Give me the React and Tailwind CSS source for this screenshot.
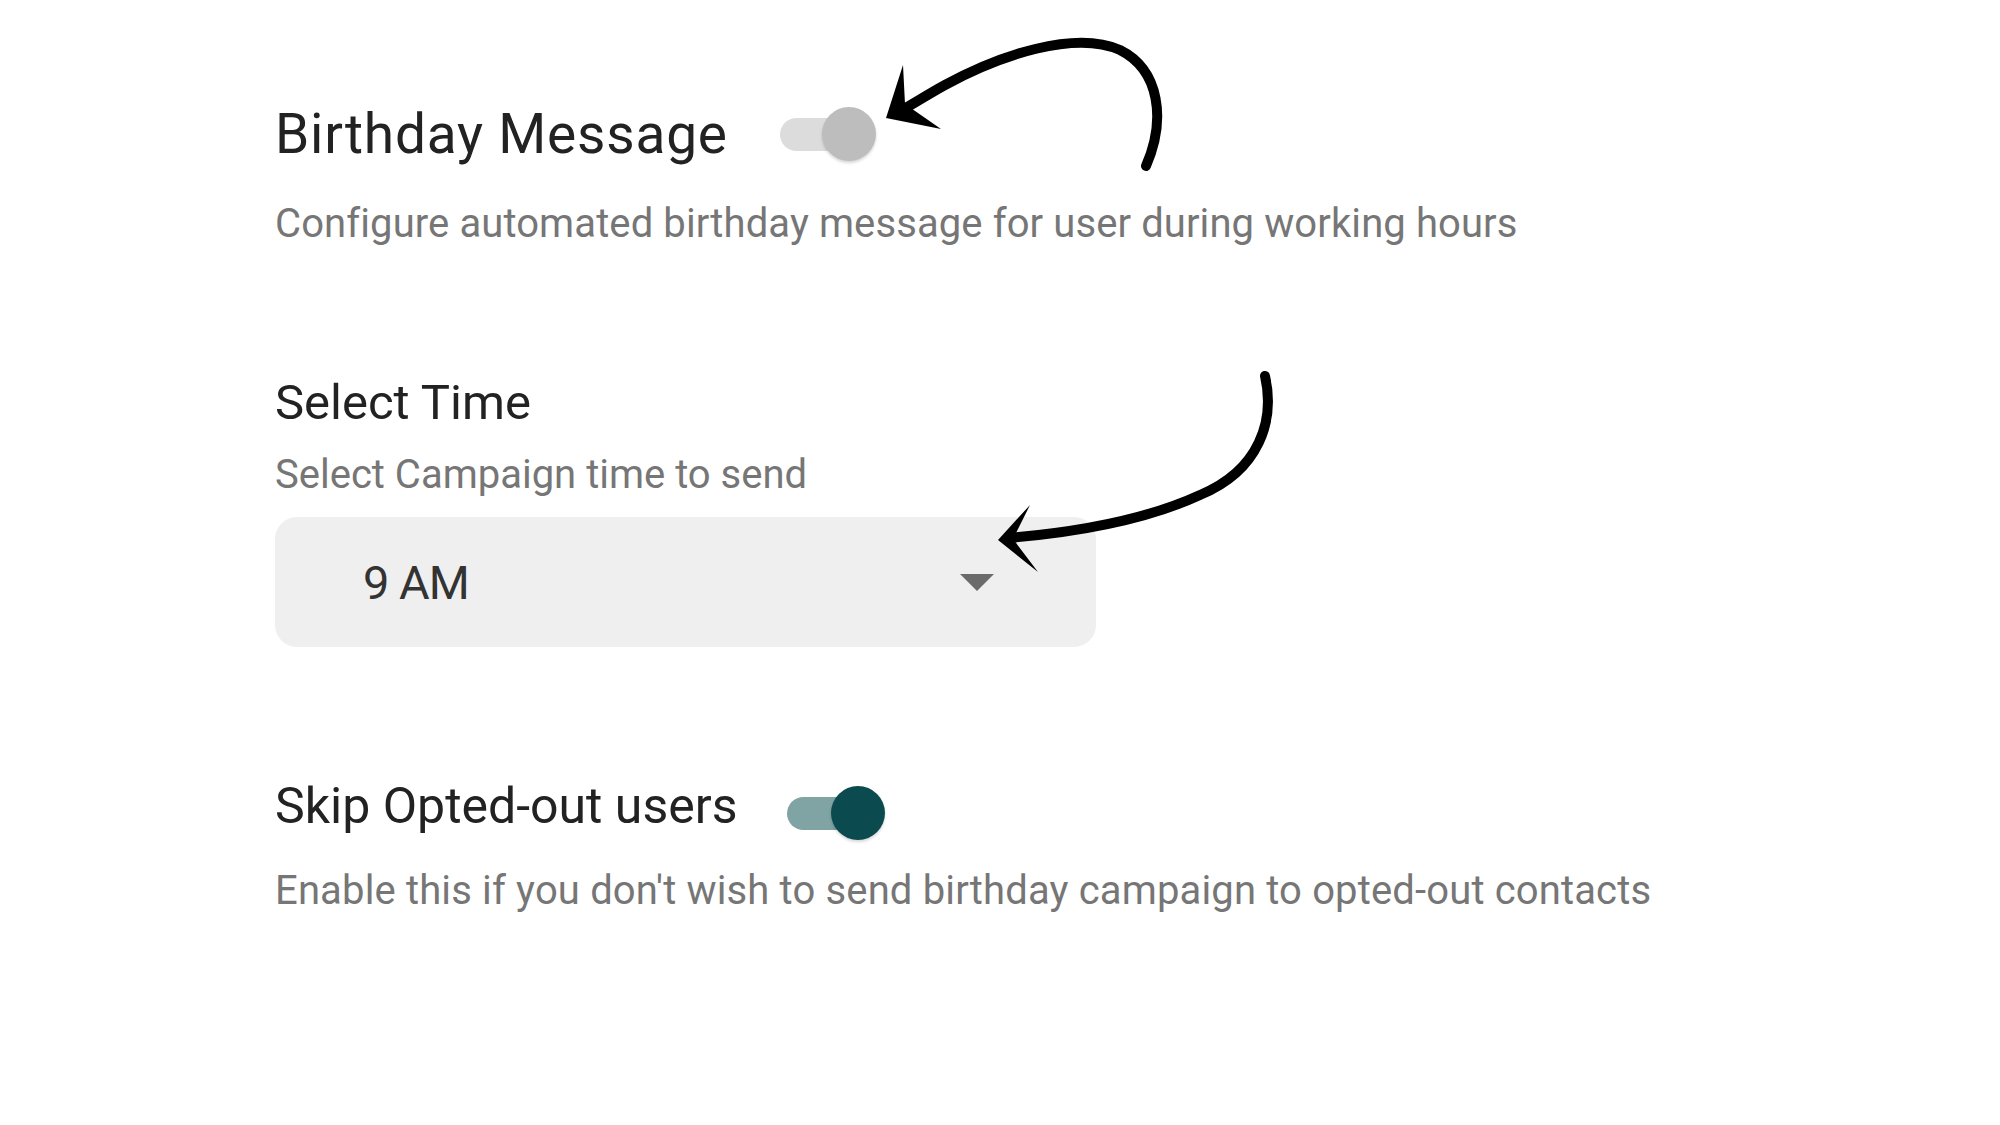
import React, { useState } from 'react'

function Toggle({ on, onChange, className = '' }) {
  return (
    <button
      onClick={() => onChange(!on)}
      className={`relative w-[96px] h-[56px] flex items-center shrink-0 ${className}`}
    >
      <span className={`block w-[86px] h-[33px] rounded-full ${on ? 'bg-[#80a3a3]' : 'bg-[#dcdcdc]'}`} />
      <span
        className={`absolute top-[1px] w-[54px] h-[54px] rounded-full shadow-[0_2px_3px_rgba(0,0,0,0.16)] ${
          on ? 'left-[44px] bg-[#0b4a4e]' : 'left-[42px] bg-[#bdbdbd]'
        }`}
      />
    </button>
  )
}

// hand-drawn pointer arrows laid over the form
function Arrows() {
  return (
    <svg className="absolute inset-0 pointer-events-none" width="2000" height="1125" viewBox="0 0 2000 1125">
      <path
        d="M1146 166 C1166 120, 1160 70, 1120 50 C1075 30, 1000 55, 945 85 C925 96, 910 106, 895 114"
        fill="none"
        stroke="#000"
        strokeWidth="10"
        strokeLinecap="round"
      />
      <path d="M886 118 L903 65 L905 104 L941 129 Z" fill="#000" />
      <path
        d="M1265 376 C1275 420, 1260 470, 1200 495 C1150 518, 1080 532, 1008 538"
        fill="none"
        stroke="#000"
        strokeWidth="10"
        strokeLinecap="round"
      />
      <path d="M998 540 L1030 505 L1013 539 L1038 572 Z" fill="#000" />
    </svg>
  )
}

export default function App() {
  const [birthday, setBirthday] = useState(false)
  const [skip, setSkip] = useState(true)

  return (
    <div className="relative w-[2000px] h-[1125px] bg-white overflow-hidden font-['Roboto',sans-serif]">
      <div className="flex flex-col pl-[275px] pt-[107px]">
        <div className="flex items-start gap-[52px]">
          <h2 className="text-[55px] leading-none text-[#222] tracking-[0.8px]">Birthday Message</h2>
          <Toggle on={birthday} onChange={setBirthday} className="-mt-[1px]" />
        </div>
        <p className="mt-[42px] text-[40px] leading-none text-[#767676] tracking-[0.1px]">
          Configure automated birthday message for user during working hours
        </p>

        <h2 className="mt-[134px] text-[49px] leading-none text-[#222]">Select Time</h2>
        <p className="mt-[28px] text-[40px] leading-none text-[#767676]">Select Campaign time to send</p>
        <button className="mt-[22px] w-[821px] h-[130px] rounded-[22px] bg-[#efefef] flex items-center justify-between pl-[88px] pr-[102px]">
          <span className="text-[47px] leading-none text-[#333] tracking-[-1px]">9 AM</span>
          <svg width="34" height="17" viewBox="0 0 34 17">
            <path d="M0 0 L34 0 L17 17 Z" fill="#6b6b6b" />
          </svg>
        </button>

        <div className="mt-[134px] flex items-start gap-[49px]">
          <h2 className="text-[50px] leading-none text-[#222]">Skip Opted-out users</h2>
          <Toggle on={skip} onChange={setSkip} className="mt-[4px]" />
        </div>
        <p className="mt-[30px] text-[40px] leading-none text-[#767676] tracking-[0.15px]">
          Enable this if you don't wish to send birthday campaign to opted-out contacts
        </p>
      </div>
      <Arrows />
    </div>
  )
}
